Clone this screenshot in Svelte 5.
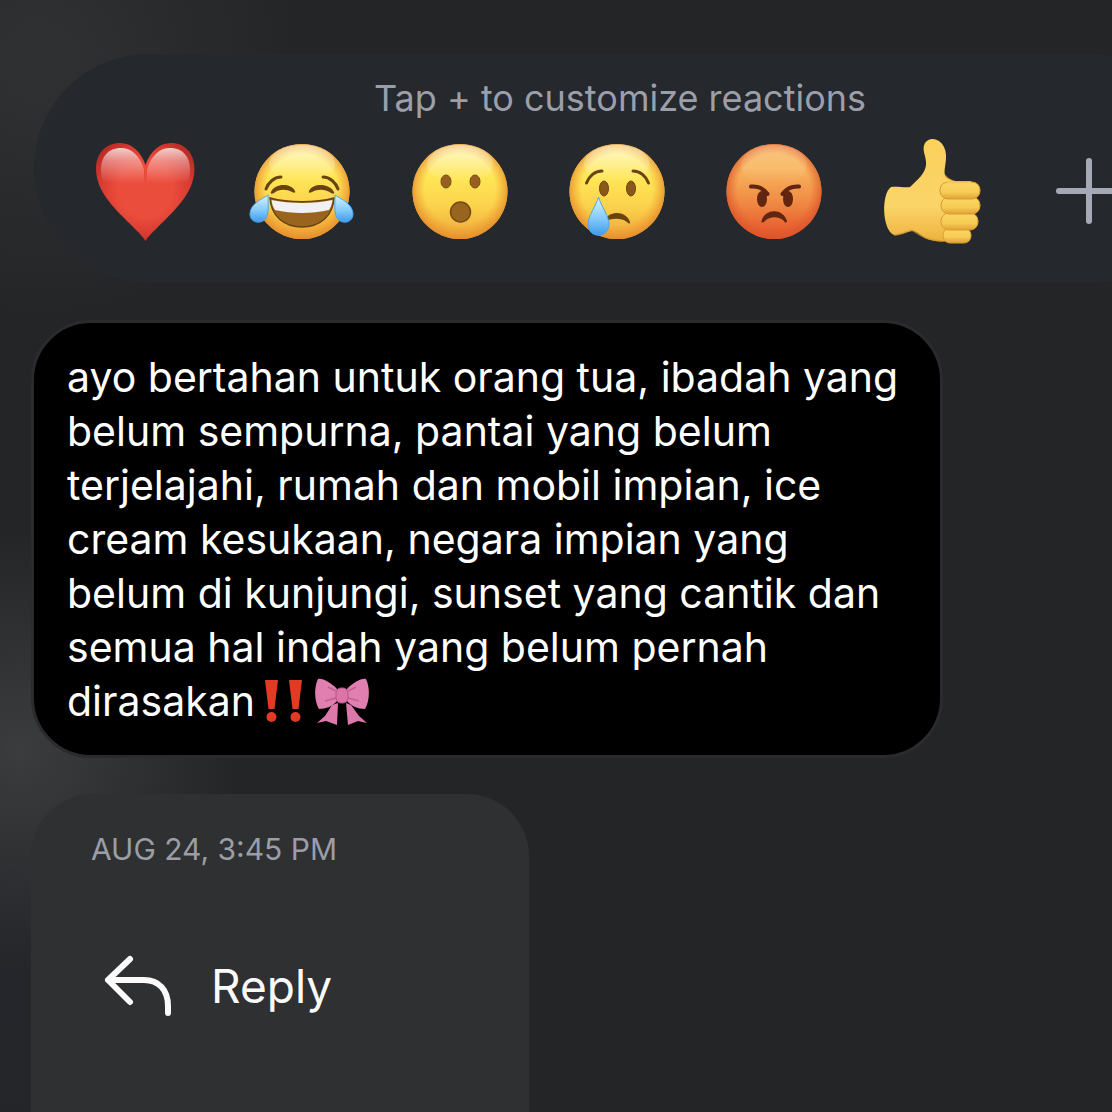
<script>
  const message =
    'ayo bertahan untuk orang tua, ibadah yang belum sempurna, pantai yang belum terjelajahi, rumah dan mobil impian, ice cream kesukaan, negara impian yang belum di kunjungi, sunset yang cantik dan semua hal indah yang belum pernah dirasakan';
  const reactions = ['Love', 'Laugh', 'Wow', 'Sad', 'Angry', 'Like'];
</script>

<main class="screen">
  <section class="tray" aria-label="Reactions">
    <p class="hint">Tap + to customize reactions</p>
    <div class="reactions">
      {#each reactions as name}
        <button class="reaction" type="button" aria-label={name}>
          <svg class="emoji" viewBox="0 0 110 110" aria-hidden="true">
            {#if name === 'Love'}
              <!-- gradients shared by the whole emoji row -->
              <defs>
                <linearGradient id="face" x1="0" y1="0" x2="0" y2="1">
                  <stop offset="0" stop-color="#fff3a0" />
                  <stop offset="0.35" stop-color="#ffe657" />
                  <stop offset="0.65" stop-color="#fbd34c" />
                  <stop offset="1" stop-color="#efa53a" />
                </linearGradient>
                <radialGradient id="rim" cx="0.5" cy="0.48" r="0.53">
                  <stop offset="0.7" stop-color="#ef9f30" stop-opacity="0" />
                  <stop offset="1" stop-color="#e58c2b" stop-opacity="1" />
                </radialGradient>
                <linearGradient id="rage" x1="0" y1="0" x2="0" y2="1">
                  <stop offset="0" stop-color="#f8b25c" />
                  <stop offset="0.25" stop-color="#f8b65f" />
                  <stop offset="0.6" stop-color="#f08c44" />
                  <stop offset="1" stop-color="#e4502c" />
                </linearGradient>
                <radialGradient id="rageRim" cx="0.5" cy="0.48" r="0.53">
                  <stop offset="0.72" stop-color="#e4602e" stop-opacity="0" />
                  <stop offset="1" stop-color="#dc542a" stop-opacity="0.95" />
                </radialGradient>
                <linearGradient id="shine" x1="0" y1="0" x2="0" y2="1">
                  <stop offset="0" stop-color="#fff" stop-opacity="0.6" />
                  <stop offset="1" stop-color="#fff" stop-opacity="0" />
                </linearGradient>
                <linearGradient id="gloss" x1="0" y1="0" x2="0" y2="1">
                  <stop offset="0" stop-color="#fff" stop-opacity="0.75" />
                  <stop offset="0.25" stop-color="#fff" stop-opacity="0.4" />
                  <stop offset="0.7" stop-color="#fff" stop-opacity="0" />
                </linearGradient>
                <radialGradient id="heart" cx="0.5" cy="0.48" r="0.62">
                  <stop offset="0.45" stop-color="#eb4d3c" />
                  <stop offset="0.75" stop-color="#d63a30" />
                  <stop offset="1" stop-color="#b02824" />
                </radialGradient>
                <linearGradient id="tear" x1="0" y1="0" x2="0" y2="1">
                  <stop offset="0" stop-color="#d9f3ff" />
                  <stop offset="0.55" stop-color="#86cbfa" />
                  <stop offset="1" stop-color="#3e9bee" />
                </linearGradient>
                <linearGradient id="hand" x1="0" y1="0" x2="0" y2="1">
                  <stop offset="0" stop-color="#fbd15c" />
                  <stop offset="0.65" stop-color="#fbd468" />
                  <stop offset="1" stop-color="#edb23f" />
                </linearGradient>
                <linearGradient id="finger" x1="0" y1="0" x2="0" y2="1">
                  <stop offset="0" stop-color="#fbd765" />
                  <stop offset="0.6" stop-color="#f8cc55" />
                  <stop offset="1" stop-color="#dfa136" />
                </linearGradient>
              </defs>
              <path fill="url(#heart)" d="M55.5 29C51 16 42 7 30 7C16 7 6 17 6 33C6 53 21 69 35 83C43 91 51 98 55.5 105C60 98 68 91 76 83C90 69 104.5 53 104.5 33C104.5 17 95 7 81 7C69 7 60 16 55.5 29Z" />
              <path fill="url(#gloss)" d="M54 34C50 19 41 12 31 12C18 12 11 21 11 34C11 46 17 55 24 62H54Z" />
              <path fill="url(#gloss)" d="M57 34C61 19 70 12 80 12C93 12 100 21 100 34C100 46 94 55 87 62H57Z" />
            {:else if name === 'Like'}
              <path fill="url(#hand)" d="M14 51C20 50 28 52 33 51C41 43 48 38 49 29C50 21 44 14 48 7C53 0 63 3 67 11C72 21 66 33 68 39C70 43 74 43 78 46L84 100C80 107 57 107 48 102C43 99 40 95 35 95C28 96 24 99 17 99C5 94 4 58 14 51Z" />
              <path fill="none" stroke="#d8972f" stroke-width="1.5" opacity="0.7" d="M68 39C70 43 74 44 79 46M17 99C24 99 28 96 35 94M35 94C41 97 46 104 66 105" />
              <rect x="66" y="92" width="28" height="15" rx="7" fill="url(#finger)" stroke="#d99b32" />
              <rect x="64" y="77" width="37" height="17" rx="8" fill="url(#finger)" stroke="#d99b32" />
              <rect x="64" y="61" width="39" height="17" rx="8" fill="url(#finger)" stroke="#d99b32" />
              <rect x="63" y="46" width="40" height="17" rx="8" fill="url(#finger)" stroke="#d99b32" />
              <path fill="#f8cf59" d="M70 45H94V48H70Z" opacity="0.8" />
            {:else if name === 'Angry'}
              <circle cx="55" cy="55.5" r="47.5" fill="url(#rage)" />
              <circle cx="55" cy="55.5" r="47.5" fill="url(#rageRim)" />
              <ellipse cx="55" cy="29" rx="33" ry="20" fill="url(#shine)" opacity="0.35" />
              <ellipse cx="43" cy="63" rx="5" ry="8" fill="#622510" />
              <ellipse cx="69" cy="63" rx="5" ry="8" fill="#622510" />
              <path class="brow rage" d="M32 50.5C39 50 45 53 48.5 58M80 50.5C73 50 67 53 63.5 58" />
              <path fill="#622510" d="M42.5 85C46 72 64 72 68 85C68 87 66 87 65 85C60 80 51 80 46 85C44 87 42.5 87 42.5 85Z" />
            {:else}
              <circle cx="55" cy="55.5" r="47.5" fill="url(#face)" />
              <circle cx="55" cy="55.5" r="47.5" fill="url(#rim)" />
              <ellipse cx="55" cy="28" rx="33" ry="19" fill="url(#shine)" opacity="0.7" />
              {#if name === 'Laugh'}
                <path class="brow" d="M19 53C21 47 27 41 34 41M76 41C83 41 89 47 91 53" />
                <path fill="#6b4310" d="M24 56C28 47 44 47 48 55C49 57 47 57 45 56C39 53 32 53 27 57C25 58 23 58 24 56ZM62 55C66 47 82 47 87 56C88 58 86 58 84 57C78 53 71 53 65 56C63 57 61 57 62 55Z" />
                <path fill="#99651e" stroke="#6b4310" stroke-width="1.5" d="M23 62C42 67 68 67 87 62C86 80 73 91 55 91C37 91 24 80 23 62Z" />
                <path fill="#f1f0f2" d="M24.5 64C43 68 67 68 85.5 64C85 68 84 71 82 74C65 78 45 78 28 74C26 71 25 68 24.5 64Z" />
                <path fill="url(#tear)" stroke="#4ca6ee" stroke-width="1" d="M21 59C15 63 3 68 3 78C3 88 17 89 20 80C22 74 21 67 21 59ZM88 59C94 63 106 68 106 78C106 88 92 89 89 80C87 74 88 67 88 59Z" />
              {:else if name === 'Wow'}
                <ellipse cx="41" cy="45.5" rx="5" ry="6.5" fill="#976020" stroke="#754a16" />
                <ellipse cx="70" cy="45.5" rx="5" ry="6.5" fill="#976020" stroke="#754a16" />
                <circle cx="55.5" cy="76" r="10" fill="#99651e" stroke="#754a16" stroke-width="1.5" />
              {:else}
                <path class="brow" d="M24.5 47C27 40 33 35 40 35M71 35C78 35 84 40 86.5 47" />
                <ellipse cx="42" cy="52.5" rx="4.5" ry="7.5" fill="#8a5719" stroke="#6b4310" />
                <ellipse cx="69" cy="52.5" rx="4.5" ry="7.5" fill="#8a5719" stroke="#6b4310" />
                <path fill="#6b4310" d="M43 83C48 75 64 74 68 86C68 88 67 88 65 86C60 82 50 82 45 85Z" />
                <path fill="url(#tear)" stroke="#4ca6ee" stroke-width="1" d="M36.5 61C34 70 26 80 26 88C26 103 47 103 47 88C47 80 39 70 36.5 61Z" />
              {/if}
            {/if}
          </svg>
        </button>
      {/each}
      <button class="reaction" type="button" aria-label="Customize reactions">
        <svg class="emoji" viewBox="0 0 110 110" aria-hidden="true">
          <path class="plus" d="M55 25V85M25 55H85" />
        </svg>
      </button>
    </div>
  </section>

  <p class="bubble">
    {message}<svg class="glyph" viewBox="0 0 54 54" role="img" aria-label="double exclamation"><g fill="#e23b24"><path d="M10 6H23L19.5 35H13.5ZM34 6H47L43.5 35H37.5Z" /><circle cx="16.5" cy="43" r="5" /><circle cx="40.5" cy="43" r="5" /></g></svg><svg class="glyph" viewBox="0 0 54 54" role="img" aria-label="ribbon"><path fill="#dc78aa" d="M17 31L10 42L2 49L11 47L22 51L23 29ZM36 31L44 42L52 49L43 47L33 51L31 29Z" /><path fill="#e17fb0" d="M22 15C16 9 8 4 3 5C-1 13 -1 27 4 35C11 35 18 32 22 27ZM32 15C38 9 46 4 51 5C55 13 55 27 50 35C43 35 36 32 32 27Z" /><path fill="none" stroke="#c4608f" stroke-width="1.5" d="M21 17L13 13M21 24L10 27M33 17L41 13M33 24L44 27" /><rect x="21" y="14" width="12" height="15" rx="5" fill="#dd74a8" stroke="#b85585" /></svg>
  </p>

  <section class="menu" aria-label="Message actions">
    <time class="date">AUG 24, 3:45 PM</time>
    <button class="action" type="button">
      <svg class="reply" viewBox="0 0 72 64" aria-hidden="true">
        <path d="M27 5L5 26L27 48M5 26H41C56 26 65 36 65 52V59" />
      </svg>
      <span>Reply</span>
    </button>
  </section>
</main>

<style>
  :global(body) {
    margin: 0;
    background: #242527;
  }
  .screen {
    box-sizing: border-box;
    min-height: 100vh;
    padding: 54px 0 0 31px;
    display: flex;
    flex-direction: column;
    align-items: flex-start;
    overflow: hidden;
    font-family: Inter, "Liberation Sans", sans-serif;
    background:
      radial-gradient(circle at 20px 750px, #3b3c3e 0, rgba(59, 60, 62, 0) 220px),
      radial-gradient(circle at 40px 60px, #2f3133 0, rgba(47, 49, 51, 0) 260px),
      radial-gradient(ellipse at 0 1000px, #24262b 0, rgba(36, 38, 43, 0) 200px),
      #242527;
  }
  button {
    padding: 0;
    border: 0;
    background: none;
    color: inherit;
    font: inherit;
    cursor: pointer;
  }
  .tray {
    box-sizing: border-box;
    align-self: stretch;
    margin: 0 -94px 0 3px;
    padding: 22px 38px 37px 32px;
    border-radius: 115px;
    background: #25282c;
  }
  .hint {
    margin: 0;
    padding-left: 6px;
    text-align: center;
    font-size: 36px;
    line-height: 44px;
    color: #9b9faa;
  }
  .reactions {
    display: grid;
    grid-template-columns: repeat(7, 1fr);
    margin-top: 16px;
  }
  .reaction {
    display: flex;
    justify-content: center;
  }
  .emoji {
    width: 110px;
    height: 110px;
  }
  .brow {
    fill: none;
    stroke: #6b4310;
    stroke-width: 3;
    stroke-linecap: round;
  }
  .rage {
    stroke: #622510;
    stroke-width: 4;
  }
  .plus {
    fill: none;
    stroke: #a5a9b5;
    stroke-width: 6;
    stroke-linecap: round;
  }
  .bubble {
    box-sizing: border-box;
    max-width: 912px;
    margin: 37px 0 0;
    padding: 27px 33px;
    border: 3px solid #2b2b2e;
    border-radius: 60px;
    background: #000;
    color: #fff;
    font-size: 41px;
    line-height: 54px;
  }
  .glyph {
    width: 54px;
    height: 54px;
    vertical-align: bottom;
  }
  .glyph + .glyph {
    margin-left: 6px;
  }
  .menu {
    box-sizing: border-box;
    flex: 1;
    width: 498px;
    max-width: 100%;
    margin-top: 36px;
    padding: 37px 60px;
    border-radius: 62px 62px 0 0;
    background: #2f3032;
  }
  .date {
    display: block;
    font-size: 30px;
    line-height: 36px;
    color: #9a9ea6;
  }
  .action {
    display: flex;
    align-items: center;
    gap: 36px;
    width: 100%;
    margin-top: 87px;
    padding-left: 12px;
    font-size: 46px;
    line-height: 64px;
    color: #fafafa;
  }
  .reply {
    width: 72px;
    height: 64px;
    fill: none;
    stroke: #fafafa;
    stroke-width: 6;
    stroke-linecap: round;
    stroke-linejoin: round;
  }
</style>
